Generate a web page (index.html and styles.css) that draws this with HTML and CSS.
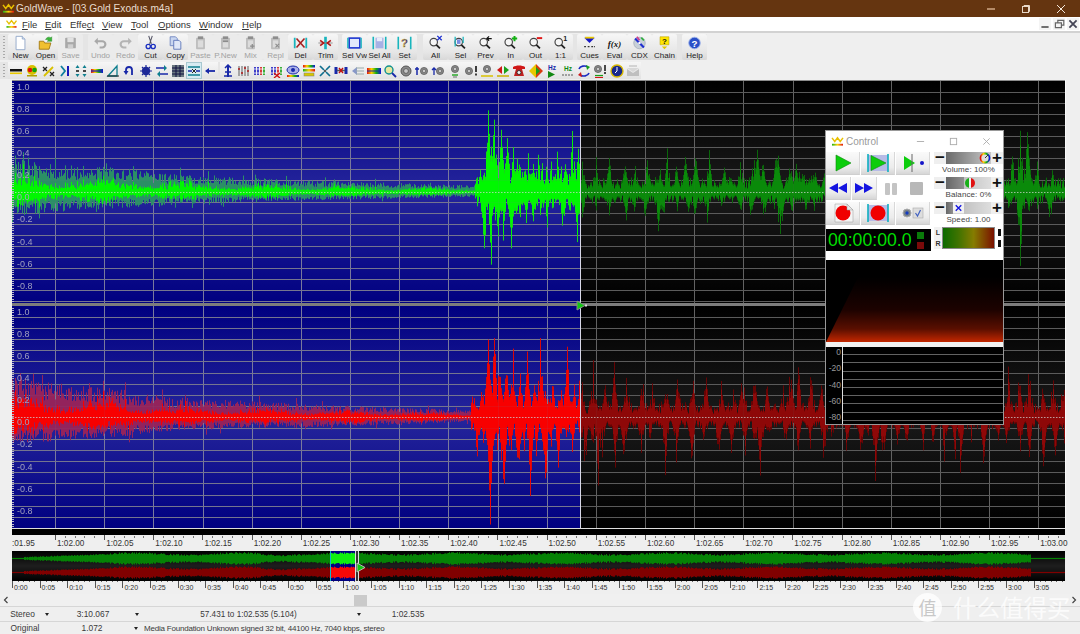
FILE: index.html
```html
<!DOCTYPE html>
<html lang="en">
<head>
<meta charset="utf-8">
<title>GoldWave</title>
<link rel="stylesheet" href="styles.css">
</head>
<body>
<svg class="defs" width="0" height="0">
  <defs>
    <linearGradient id="rain" x1="0" x2="1" y1="0" y2="0"><stop offset="0" stop-color="#19b319"/><stop offset=".5" stop-color="#ffd400"/><stop offset="1" stop-color="#e01010"/></linearGradient>
    <linearGradient id="specg" x1="0" x2="0" y1="0" y2="1"><stop offset="0" stop-color="#000"/><stop offset=".5" stop-color="#1c0200"/><stop offset=".8" stop-color="#5a0f00"/><stop offset="1" stop-color="#c42700"/></linearGradient>
    <linearGradient id="multi" x1="0" x2="1" y1="0" y2="0"><stop offset="0" stop-color="#e01010"/><stop offset=".33" stop-color="#ffd400"/><stop offset=".66" stop-color="#10b010"/><stop offset="1" stop-color="#1010e0"/></linearGradient>
    <symbol id="logo" viewBox="0 0 14 12"><path d="M1 2l3 4 3-4 3 4 3-4" fill="none" stroke="#e8c000" stroke-width="1.6"/><rect x="1" y="8.5" width="12" height="2" fill="url(#rain)"/></symbol>
    <symbol id="mag" viewBox="0 0 18 18"><circle cx="7" cy="8" r="4.2" fill="#f6f6f6" stroke="#444" stroke-width="1.3"/><path d="M10 11l4 4" stroke="#222" stroke-width="2"/></symbol>
    <symbol id="clip" viewBox="0 0 18 18"><rect x="4" y="3" width="10" height="13" rx="1" fill="#bdbdbd"/><rect x="6" y="1.5" width="6" height="3" fill="#8e8e8e"/><rect x="6" y="6" width="6" height="8" fill="#dcdcdc"/></symbol>
    <symbol id="dial" viewBox="0 0 14 14"><circle cx="7" cy="7" r="5" fill="#8a8a8a" stroke="#555"/><circle cx="7" cy="7" r="2.4" fill="#c8c8c8" stroke="#444" stroke-width=".7"/></symbol>
    <symbol id="mini" viewBox="0 0 14 14"><g stroke="#1515c0" stroke-width="1.6"><path d="M2 3v8M5 3v8"/></g><g stroke="#d01010" stroke-width="1.6"><path d="M8 3v8"/></g><g stroke="#10a010" stroke-width="1.6"><path d="M11 3v8"/></g><path d="M1 5h12M1 9h12" stroke="#fff" stroke-width=".8"/></symbol>
  </defs>
</svg>

<div class="app">
  <header class="titlebar">
    <svg class="title-logo"><use href="#logo"/></svg>
    <span class="title-text">GoldWave - [03.Gold Exodus.m4a]</span>
    <span class="winbtns">
      <svg class="wb" viewBox="0 0 10 10"><path d="M1 5h8" stroke="#d8b090" stroke-width="1.4"/></svg>
      <svg class="wb" viewBox="0 0 10 10"><rect x="1.5" y="2.5" width="6" height="6" fill="none" stroke="#e8d8c8"/><path d="M3 2.5v-1h5.5v6h-1" fill="none" stroke="#e8d8c8"/></svg>
      <svg class="wb" viewBox="0 0 10 10"><path d="M1 1l8 8M9 1l-8 8" stroke="#f4e8dc" stroke-width="1"/></svg>
    </span>
  </header>

  <nav class="menubar">
    <svg class="menu-logo"><use href="#logo"/></svg>
    <span class="mi m-file"><u>F</u>ile</span>
    <span class="mi m-edit"><u>E</u>dit</span>
    <span class="mi m-effect">Effe<u>c</u>t</span>
    <span class="mi m-view"><u>V</u>iew</span>
    <span class="mi m-tool"><u>T</u>ool</span>
    <span class="mi m-options"><u>O</u>ptions</span>
    <span class="mi m-window"><u>W</u>indow</span>
    <span class="mi m-help"><u>H</u>elp</span>
    <span class="mdi">
      <svg class="mdb" viewBox="0 0 10 10"><path d="M2 7.5h6" stroke="#555" stroke-width="1.4"/></svg>
      <svg class="mdb" viewBox="0 0 10 10"><path d="M2 4h5v4H2zM4 4V2h5v4H7" fill="none" stroke="#666"/></svg>
      <svg class="mdb" viewBox="0 0 10 10"><path d="M2 2l6 6M8 2l-6 6" stroke="#445" stroke-width="1.5"/></svg>
    </span>
  </nav>

  <section class="toolbars">
    <div class="tb-row">
      <div class="band band-main">
        <i class="grip"></i>
        <div class="btn"><svg class="ic" viewBox="0 0 18 18"><path d="M4 1.500h7l3 3v12H4z" fill="#fff" stroke="#8fa6c8"/><path d="M11 1.500v3h3" fill="#dde6f5" stroke="#8fa6c8"/></svg><span>New</span></div>
        <div class="btn"><svg class="ic" viewBox="0 0 18 18"><path d="M2 7h5l1 2h7l-2 7H2z" fill="#f0c030" stroke="#a07810"/><path d="M9 5c2-3 4-3 6-2l1-1v5h-5l1.500-1.300c-1-.7-2-.7-3.500-.7z" fill="#39b739" stroke="#1c7f1c" stroke-width=".5"/></svg><span>Open</span></div>
        <div class="btn off"><svg class="ic" viewBox="0 0 18 18"><rect x="3" y="3" width="12" height="12" rx="1" fill="#a9a9a9"/><rect x="5.500" y="3" width="7" height="5" fill="#e2e2e2"/><rect x="6" y="10.500" width="6" height="4.500" fill="#cfcfcf"/></svg><span>Save</span></div>
        <i class="gap5"></i>
        <div class="btn off"><svg class="ic" viewBox="0 0 18 18"><path d="M5 7h6a3.500 3.500 0 0 1 0 7H8" fill="none" stroke="#a8a8a8" stroke-width="2.400"/><path d="M2 7l4-4v8z" fill="#a8a8a8"/></svg><span>Undo</span></div>
        <div class="btn off"><svg class="ic" viewBox="0 0 18 18"><path d="M13 7H7a3.500 3.500 0 0 0 0 7h3" fill="none" stroke="#b4b4b4" stroke-width="2.400"/><path d="M16 7l-4-4v8z" fill="#b4b4b4"/></svg><span>Redo</span></div>
        <div class="btn"><svg class="ic" viewBox="0 0 18 18"><path d="M7 1l3 9M11 1l-3 9" stroke="#556" stroke-width="1.200"/><circle cx="6.500" cy="13" r="2.400" fill="none" stroke="#1a2fc0" stroke-width="1.500"/><circle cx="12" cy="13" r="2.400" fill="none" stroke="#1a2fc0" stroke-width="1.500"/></svg><span>Cut</span></div>
        <div class="btn"><svg class="ic" viewBox="0 0 18 18"><path d="M3 2h6l2 2v8H3z" fill="#c9d6f0" stroke="#6d84c0"/><path d="M7 6h6l2 2v8H7z" fill="#dfe7f8" stroke="#5b74b8"/></svg><span>Copy</span></div>
        <div class="btn off"><svg class="ic"><use href="#clip"/></svg><span>Paste</span></div>
        <div class="btn off"><svg class="ic" viewBox="0 0 18 18"><use href="#clip" width="18" height="18"/><rect x="6" y="6" width="6" height="2" fill="#8c8c8c"/></svg><span>P.New</span></div>
        <div class="btn off"><svg class="ic" viewBox="0 0 18 18"><use href="#clip" width="18" height="18"/><path d="M11 10v5M8.500 12.500h5" stroke="#8c8c8c" stroke-width="1.400"/></svg><span>Mix</span></div>
        <div class="btn off"><svg class="ic" viewBox="0 0 18 18"><use href="#clip" width="18" height="18"/><path d="M9 10l4 4M13 10l-4 4" stroke="#8c8c8c" stroke-width="1.200"/></svg><span>Repl</span></div>
        <div class="btn"><svg class="ic" viewBox="0 0 18 18"><path d="M2.500 3v12M15.500 3v12" stroke="#19b5bd" stroke-width="2"/><path d="M4.500 4l9 10M13.500 4l-9 10" stroke="#a52020" stroke-width="1.800"/></svg><span>Del</span></div>
        <div class="btn"><svg class="ic" viewBox="0 0 18 18"><path d="M9 2v14" stroke="#19b5bd" stroke-width="3"/><path d="M1 9h16" stroke="#888" stroke-width="1"/><path d="M3 6l4 3-4 3M15 6l-4 3 4 3" fill="none" stroke="#b01818" stroke-width="1.800"/></svg><span>Trim</span></div>
        <i class="gap4"></i>
        <div class="btn"><svg class="ic" viewBox="0 0 18 18"><rect x="3" y="3.500" width="12" height="11" fill="#e2e8fb" stroke="#1c35d0" stroke-width="1.800"/><path d="M1.500 3v12M16.500 3v12" stroke="#19b5bd" stroke-width="1.500"/></svg><span>Sel Vw</span></div>
        <div class="btn"><svg class="ic" viewBox="0 0 18 18"><path d="M2 2v14M16 2v14" stroke="#19b5bd" stroke-width="1.800"/><rect x="4.500" y="3" width="9" height="12" fill="#a7b1e5"/><rect x="6" y="3" width="6" height="4" fill="#e9ecfa"/></svg><span>Sel All</span></div>
        <div class="btn"><svg class="ic" viewBox="0 0 18 18"><path d="M2 2v14M16 2v14" stroke="#19b5bd" stroke-width="1.800"/><text x="9" y="14" class="q">?</text></svg><span>Set</span></div>
        <i class="gap6"></i>
        <div class="btn"><svg class="ic" viewBox="0 0 18 18"><use href="#mag" width="18" height="18"/><path d="M11 1l5 5M16 1l-5 5" stroke="#1c2fd0" stroke-width="1.500"/></svg><span>All</span></div>
        <div class="btn"><svg class="ic" viewBox="0 0 18 18"><use href="#mag" width="18" height="18"/><path d="M3 2v11M12 2v7" stroke="#19b5bd" stroke-width="1.400"/><rect x="5" y="5" width="4" height="5" fill="#7a8ae0"/></svg><span>Sel</span></div>
        <div class="btn"><svg class="ic" viewBox="0 0 18 18"><use href="#mag" width="18" height="18"/><path d="M11 4h5M13 1.500L10.500 4 13 6.500" fill="none" stroke="#111" stroke-width="1.400"/></svg><span>Prev</span></div>
        <div class="btn"><svg class="ic" viewBox="0 0 18 18"><use href="#mag" width="18" height="18"/><path d="M13.500 1v6M10.500 4h6" stroke="#12b012" stroke-width="2.200"/></svg><span>In</span></div>
        <div class="btn"><svg class="ic" viewBox="0 0 18 18"><use href="#mag" width="18" height="18"/><path d="M10.500 3.500h6" stroke="#e01818" stroke-width="2.200"/></svg><span>Out</span></div>
        <div class="btn"><svg class="ic" viewBox="0 0 18 18"><use href="#mag" width="18" height="18"/><text x="12" y="7" class="one">1</text></svg><span>1:1</span></div>
        <i class="gap4"></i>
        <div class="btn"><svg class="ic" viewBox="0 0 18 18"><path d="M3 3h12l-6 6z" fill="#1818c8"/><path d="M4 3h10" stroke="#e8c800" stroke-width="2"/><path d="M3 13h2M7 13h2M11 13h2M14 13h1" stroke="#333" stroke-width="1.400"/></svg><span>Cues</span></div>
        <div class="btn"><svg class="ic" viewBox="0 0 18 18"><text x="9" y="13" class="fx">f(x)</text></svg><span>Eval</span></div>
        <div class="btn"><svg class="ic" viewBox="0 0 18 18"><circle cx="9" cy="9" r="6.500" fill="#c8d0d8" stroke="#8a96a8" stroke-width=".6"/><path d="M4 4l10 10" stroke="#1f2fd0" stroke-width="2.400"/><path d="M6 2l3 4" stroke="#d04090" stroke-width="2"/><path d="M11 3l3 3" stroke="#30b040" stroke-width="2"/><circle cx="9" cy="9" r="1.400" fill="#fff"/></svg><span>CDX</span></div>
        <div class="btn"><svg class="ic" viewBox="0 0 18 18"><path d="M4 2h10v9H4z" fill="#ffe600" stroke="#b8a000" stroke-width=".6"/><path d="M6 13h6l-3 3z" fill="#e0c800"/><text x="9" y="10" class="q2">?</text></svg><span>Chain</span></div>
        <i class="gap5"></i>
        <div class="btn"><svg class="ic" viewBox="0 0 18 18"><circle cx="9" cy="9" r="6.500" fill="#2a50c8" stroke="#9ab0e8"/><text x="9" y="13" class="q3">?</text></svg><span>Help</span></div>
      </div>
    </div>
    <div class="tb-row tb-small">
      <div class="band band-small">
        <i class="grip"></i>
        <span class="ib"><svg viewBox="0 0 14 14"><rect x="1" y="5" width="12" height="2.500" fill="#111"/><rect x="1" y="8.500" width="12" height="1.600" fill="#e8c800"/></svg></span>
        <span class="ib"><svg viewBox="0 0 14 14"><circle cx="7" cy="6" r="5" fill="#d8c000"/><circle cx="5" cy="6" r="2.300" fill="#e01010"/><circle cx="9.500" cy="6" r="2.300" fill="#10a010"/><rect x="2" y="11" width="10" height="1.500" fill="#b0a000"/></svg></span>
        <span class="ib"><svg viewBox="0 0 14 14"><path d="M2 3l4 4M6 3L2 7M9 8l4 4M13 8l-4 4" stroke="#222" stroke-width="1.300"/><path d="M3 12L12 3" stroke="#d8c000" stroke-width="1.800"/></svg></span>
        <span class="ib"><svg viewBox="0 0 14 14"><path d="M3 2l4 5-4 5" fill="none" stroke="#0f7f9f" stroke-width="1.800"/><path d="M10 2v10" stroke="#1818b8" stroke-width="2"/></svg></span>
        <span class="ib"><svg viewBox="0 0 14 14"><path d="M3.500 1l2 3h-4zM10.500 1l2 3h-4zM3.500 13l2-3h-4zM10.500 13l2-3h-4z" fill="#0f7f8f"/><path d="M2 7h3M9 7h3" stroke="#111" stroke-width="1.500"/></svg></span>
        <span class="ib"><svg viewBox="0 0 14 14"><rect x="1" y="5" width="12" height="4" fill="url(#multi)"/><path d="M1 7h12" stroke="#1818c0" stroke-width="1.200"/></svg></span>
        <span class="ib"><svg viewBox="0 0 14 14"><path d="M2 12L11 2v10z" fill="none" stroke="#0f7f8f" stroke-width="1.300"/><path d="M1 12h12" stroke="#222"/></svg></span>
        <span class="ib"><svg viewBox="0 0 14 14"><path d="M4 8V6a3 3 0 0 1 6 0v5" fill="none" stroke="#1828a8" stroke-width="1.800"/><path d="M1.500 7h5L4 11z" fill="#1828a8"/></svg></span>
        <span class="ib"><svg viewBox="0 0 14 14"><circle cx="7" cy="7" r="4.200" fill="#1c2898"/><path d="M7 1v12M1 7h12M3 3l8 8M11 3l-8 8" stroke="#1c2898" stroke-width="1.200"/></svg></span>
        <span class="ib"><svg viewBox="0 0 14 14"><path d="M1 4h8M5 10h8" stroke="#1828a8" stroke-width="1.500"/><path d="M9 1l3 3-3 3zM5 7l-3 3 3 3z" fill="#0f7f8f"/></svg></span>
        <span class="ib"><svg viewBox="0 0 14 14"><rect x="1" y="1" width="12" height="12" fill="#6a7880"/><path d="M1 4h12M1 7h12M1 10h12M5 1v12M9 1v12" stroke="#101040"/></svg></span>
        <span class="ib sel"><svg viewBox="0 0 14 14"><path d="M1 3h12M1 11h12" stroke="#0f7f8f" stroke-width="1.600"/><path d="M1 7h4M9 7h4" stroke="#1828a8" stroke-width="1.500"/><path d="M5 5l2 2-2 2M9 5L7 7l2 2" fill="none" stroke="#222"/></svg></span>
        <span class="ib"><svg viewBox="0 0 14 14"><path d="M3 7h9" stroke="#1828a8" stroke-width="1.800"/><path d="M6 4L2 7l4 3z" fill="#1828a8"/></svg></span>
        <i class="gap2"></i>
        <span class="ib"><svg viewBox="0 0 14 14"><path d="M7 1v12" stroke="#1828a8" stroke-width="2"/><path d="M4 4l3-3 3 3M4 8h6M3 12h8" fill="none" stroke="#1828a8" stroke-width="1.500"/></svg></span>
        <span class="ib"><svg viewBox="0 0 14 14"><path d="M2 2v10M5 2v10M8 2v10M11 2v10" stroke="#888" stroke-width="1.400"/><path d="M1 5h2M4 9h2M7 4h2M10 7h2" stroke="#b01818" stroke-width="1.600"/></svg></span>
        <span class="ib"><svg><use href="#mini"/></svg></span>
        <span class="ib"><svg viewBox="0 0 14 14"><use href="#mini" width="14" height="14"/><path d="M4 9l6 5M10 9l-6 5" stroke="#d01010" stroke-width="1.300"/></svg></span>
        <span class="ib"><svg viewBox="0 0 14 14"><ellipse cx="7" cy="6" rx="6" ry="4" fill="#aab0e8" stroke="#1828a8"/><circle cx="7" cy="6" r="2" fill="#1828a8"/><rect x="1" y="11" width="12" height="2" fill="url(#multi)"/></svg></span>
        <span class="ib"><svg viewBox="0 0 14 14"><rect x="1" y="1" width="12" height="2.500" fill="url(#multi)"/><rect x="1" y="5" width="12" height="2.500" fill="url(#rain)"/><rect x="2" y="9" width="10" height="3" fill="#d8c800" stroke="#777" stroke-width=".5"/></svg></span>
        <span class="ib"><svg viewBox="0 0 14 14"><path d="M2 2l4 4M12 2L8 6M2 12l4-4M12 12L8 8" stroke="#0f6f8f" stroke-width="1.700"/><circle cx="7" cy="7" r="1" fill="#222"/></svg></span>
        <span class="ib"><svg viewBox="0 0 14 14"><rect x=".5" y="3" width="3" height="7" fill="#1828a8"/><rect x="10.500" y="3" width="3" height="7" fill="#1828a8"/><path d="M3 6.500h8" stroke="#555" stroke-width="1.500"/><path d="M5 4l4 5M9 4l-4 5" stroke="#c01010" stroke-width="1.400"/></svg></span>
        <span class="ib"><svg viewBox="0 0 14 14"><path d="M1 7l5-4v8z" fill="#8898c8"/><path d="M5 4h8M5 7h8M5 10h8" stroke="#9aa" stroke-width="1"/></svg></span>
        <span class="ib"><svg viewBox="0 0 14 14"><rect x="0" y="4" width="14" height="6" fill="url(#multi)"/><path d="M0 7h14" stroke="#1828a8"/></svg></span>
        <span class="ib"><svg viewBox="0 0 14 14"><circle cx="6" cy="6" r="4" fill="#e8e8a0" stroke="#109090" stroke-width="1.400"/><path d="M9 9l4 4" stroke="#1828a8" stroke-width="1.800"/></svg></span>
        <span class="ib"><svg><use href="#dial"/></svg></span>
        <span class="ib"><svg viewBox="0 0 14 14"><use href="#dial" x="4" y="2" width="10" height="10"/><path d="M2 3v8M0 5h4" stroke="#1828a8" stroke-width="1.500"/></svg></span>
        <span class="ib"><svg viewBox="0 0 14 14"><use href="#dial" x="4" y="2" width="10" height="10"/><path d="M3 11V4M1 6l2-2 2 2" fill="none" stroke="#1828a8" stroke-width="1.300"/></svg></span>
        <span class="ib"><svg viewBox="0 0 14 14"><use href="#dial" x="2" y="0" width="10" height="10"/><path d="M4 11h6" stroke="#10a010" stroke-width="1.300"/><path d="M5 13h4" stroke="#888" stroke-width="1.300"/></svg></span>
        <span class="ib"><svg viewBox="0 0 14 14"><use href="#dial" x="0" y="2" width="10" height="10"/><path d="M12 2v6M12 9.500v2" stroke="#111" stroke-width="1.600"/></svg></span>
        <span class="ib"><svg viewBox="0 0 14 14"><use href="#dial" x="2" y="0" width="10" height="10"/><path d="M1 12h12" stroke="#d8c000" stroke-width="1.500"/></svg></span>
        <span class="ib"><svg viewBox="0 0 14 14"><path d="M6 2L1 6l5 4z" fill="#d01818"/><path d="M8 2l5 4-5 4z" fill="#18a018"/><path d="M1 12h12" stroke="#c8b000" stroke-width="1.500"/></svg></span>
        <span class="ib"><svg viewBox="0 0 14 14"><path d="M1 3c3-2 9-2 12 0v2H1z" fill="#d01818"/><path d="M4 5h6l2 7H2z" fill="#c02020"/><circle cx="7" cy="8.500" r="2" fill="#eee" stroke="#222" stroke-width=".8"/></svg></span>
        <span class="ib"><svg viewBox="0 0 14 14"><path d="M7 0l7 7-7 7z" fill="#d83a10"/><path d="M7 0L0 7l7 7z" fill="#e8c800"/><path d="M7 3l4 4-4 4z" fill="#18a018"/></svg></span>
        <span class="ib"><svg viewBox="0 0 14 14"><text x="7" y="6" class="hz">Hz</text><path d="M3 7l7 3.500L3 14z" fill="#118811"/></svg></span>
        <span class="ib"><svg viewBox="0 0 14 14"><text x="7" y="7" class="hz hzg">Hz</text><path d="M1 11h12" stroke="#888" stroke-width="1.600" stroke-dasharray="2 1"/></svg></span>
        <span class="ib"><svg viewBox="0 0 14 14"><path d="M2 5c1-3 6-4 9-2M12 9c-1 3-6 4-9 2" fill="none" stroke="#1828c0" stroke-width="1.600"/><path d="M9 1l4 2-3 3z" fill="#18a018"/><path d="M5 13l-4-2 3-3z" fill="#d01818"/></svg></span>
        <span class="ib"><svg viewBox="0 0 14 14"><use href="#dial" x="0" y="0" width="10" height="10"/><path d="M12 1v6M12 8v2" stroke="#111" stroke-width="1.500"/><path d="M2 11.500h8" stroke="#18a018" stroke-width="1.200"/><path d="M2 13.500h8" stroke="#d01818" stroke-width="1.200"/></svg></span>
        <span class="ib"><svg viewBox="0 0 14 14"><circle cx="7" cy="7" r="6" fill="#18288c" stroke="#d8b800" stroke-width="1.400"/><path d="M7 3v4l-2 2" fill="none" stroke="#fff" stroke-width="1"/></svg></span>
        <span class="ib"><svg viewBox="0 0 14 14"><path d="M1 5l6 4 6-4v7H1z" fill="#bfbfbf"/><path d="M1 4h12L7 8z" fill="#d8d8d8"/><path d="M3 2h8" stroke="#c8c8c8" stroke-width="1.500"/></svg></span>
      </div>
    </div>
  </section>

  <main class="workspace">
    <div class="wave-frame">
      <div class="channel ch-top">
        <canvas id="chL" class="wave" width="1053" height="222"></canvas>
        <div class="amps">
          <span>1.0</span><span>0.8</span><span>0.6</span><span>0.4</span><span>0.2</span><span>0.0</span><span>-0.2</span><span>-0.4</span><span>-0.6</span><span>-0.8</span>
        </div>
      </div>
      <div class="separator"></div>
      <div class="channel ch-bottom">
        <canvas id="chR" class="wave" width="1053" height="222"></canvas>
        <div class="amps">
          <span>1.0</span><span>0.8</span><span>0.6</span><span>0.4</span><span>0.2</span><span>0.0</span><span>-0.2</span><span>-0.4</span><span>-0.6</span><span>-0.8</span>
        </div>
      </div>
      <svg class="cursor-mark" viewBox="0 0 11 11"><path d="M1 1l8 4.500-8 4.500z" fill="#11c811" stroke="#888"/><rect x="9" y="4.500" width="2" height="2" fill="#ddd"/></svg>
    </div>
    <div class="black-strip"></div>
    <div class="ruler">
      <span class="r-first">:01.95</span>
      <span>1:02.00</span><span>1:02.05</span><span>1:02.10</span><span>1:02.15</span><span>1:02.20</span><span>1:02.25</span><span>1:02.30</span><span>1:02.35</span><span>1:02.40</span><span>1:02.45</span><span>1:02.50</span><span>1:02.55</span><span>1:02.60</span><span>1:02.65</span><span>1:02.70</span><span>1:02.75</span><span>1:02.80</span><span>1:02.85</span><span>1:02.90</span><span>1:02.95</span><span class="r-last">1:03.00</span>
    </div>
    <div class="over-wrap">
      <canvas id="overview" width="1053" height="30"></canvas>
      <svg class="over-mark" viewBox="0 0 11 11"><path d="M1 1l8 4.500-8 4.500z" fill="#11c811" stroke="#bbb"/></svg>
    </div>
    <div class="ruler2">
      <span>0:00</span><span>0:05</span><span>0:10</span><span>0:15</span><span>0:20</span><span>0:25</span><span>0:30</span><span>0:35</span><span>0:40</span><span>0:45</span><span>0:50</span><span>0:55</span><span>1:00</span><span>1:05</span><span>1:10</span><span>1:15</span><span>1:20</span><span>1:25</span><span>1:30</span><span>1:35</span><span>1:40</span><span>1:45</span><span>1:50</span><span>1:55</span><span>2:00</span><span>2:05</span><span>2:10</span><span>2:15</span><span>2:20</span><span>2:25</span><span>2:30</span><span>2:35</span><span>2:40</span><span>2:45</span><span>2:50</span><span>2:55</span><span>3:00</span><span class="r-last">3:05</span>
    </div>
  </main>

  <div class="scrollbar">
    <svg class="chev" viewBox="0 0 6 8"><path d="M4.500 1L1.500 4l3 3" fill="none" stroke="#444" stroke-width="1.200"/></svg>
    <span class="thumb"></span>
    <svg class="chev chev-r" viewBox="0 0 6 8"><path d="M1.500 1l3 3-3 3" fill="none" stroke="#444" stroke-width="1.200"/></svg>
  </div>

  <footer class="status">
    <div class="st-row st-one">
      <span class="c1">Stereo</span><i class="dd"></i>
      <span class="c2">3:10.067</span><i class="dd"></i>
      <span class="c3">57.431 to 1:02.535 (5.104)</span><i class="dd"></i>
      <span class="c4">1:02.535</span>
    </div>
    <div class="st-row st-two">
      <span class="c1">Original</span>
      <span class="c2 c2b">1.072</span><i class="dd"></i>
      <span class="c5">Media Foundation Unknown signed 32 bit, 44100 Hz, 7040 kbps, stereo</span>
    </div>
  </footer>

  <section class="control">
    <div class="ctl-title">
      <svg class="ctl-logo"><use href="#logo"/></svg>
      <span class="ctl-name">Control</span>
      <span class="ctl-wbs">
        <svg class="cw" viewBox="0 0 10 10"><path d="M1 5h8" stroke="#aaa"/></svg>
        <svg class="cw" viewBox="0 0 10 10"><rect x="1.500" y="1.500" width="7" height="7" fill="none" stroke="#aaa"/></svg>
        <svg class="cw" viewBox="0 0 10 10"><path d="M1.500 1.500l7 7M8.500 1.500l-7 7" stroke="#aaa"/></svg>
      </span>
    </div>
    <div class="ctl-grid">
      <div class="ctl-left">
        <div class="ctl-row">
          <div class="cb"><svg class="cbi" viewBox="0 0 28 20"><path d="M7 2l15 8-15 8z" fill="#0ccd0c" stroke="#0a8a0a" stroke-width=".6"/></svg></div>
          <div class="cb"><svg class="cbi" viewBox="0 0 28 20"><rect x="4" y="2" width="20" height="16" fill="#b7bbe6"/><path d="M4 1v18M24 1v18" stroke="#10b0c0" stroke-width="1.600"/><path d="M7 2.500l15 7.500-15 7.500z" fill="#0ccd0c" stroke="#0a8a0a" stroke-width=".6"/></svg></div>
          <div class="cb"><svg class="cbi" viewBox="0 0 28 20"><path d="M5 3l11 7-11 7z" fill="#0ccd0c"/><path d="M13 1v18" stroke="#666"/><circle cx="23" cy="10" r="2" fill="#1414c8"/></svg></div>
        </div>
        <div class="ctl-row">
          <div class="cb cb-s"><svg class="cbi" viewBox="0 0 24 14"><path d="M12 2v10L3 7zM21 2v10l-9-5z" fill="#1414e0"/></svg></div>
          <div class="cb cb-s"><svg class="cbi" viewBox="0 0 24 14"><path d="M3 2v10l9-5zM12 2v10l9-5z" fill="#1414e0"/></svg></div>
          <div class="cb-off"><i class="pbar"></i><i class="pbar"></i></div>
          <div class="cb-off"><i class="stopb"></i></div>
        </div>
        <div class="ctl-row">
          <div class="cb"><svg class="cbi" viewBox="0 0 28 20"><path d="M6 1h12l6 6v12H6z" fill="#f4f4f4" stroke="#aaa" stroke-width=".6"/><circle cx="14" cy="10" r="7.500" fill="#f00000"/><path d="M18 1l6 6h-6z" fill="#e8e8e8" stroke="#999" stroke-width=".5"/></svg></div>
          <div class="cb"><svg class="cbi" viewBox="0 0 28 20"><rect x="4" y="2" width="20" height="16" fill="#b7bbe6"/><path d="M4 1v18M24 1v18" stroke="#10b0c0" stroke-width="1.600"/><circle cx="14" cy="10" r="7.500" fill="#f00000"/></svg></div>
          <div class="cb"><svg class="cbi" viewBox="0 0 28 20"><circle cx="8" cy="10" r="4" fill="#7a8288" stroke="#aaa"/><circle cx="8" cy="10" r="1.700" fill="#143cc0"/><rect x="14" y="5" width="10" height="10" fill="#ddd" stroke="#aaa" stroke-width=".6"/><path d="M16.500 10l2 3 3-6" fill="none" stroke="#4060c0" stroke-width="1.200"/></svg></div>
        </div>
        <div class="timer">
          <span class="time">00:00:00.0</span>
          <span class="lamps"><i class="lamp-g"></i><i class="lamp-r"></i></span>
        </div>
      </div>
      <div class="ctl-right">
        <div class="slider"><i class="sb">−</i><div class="track t-vol"><svg class="knob" viewBox="0 0 12 12"><circle cx="6" cy="6" r="4.500" fill="#ddd" stroke="url(#multi)" stroke-width="1.800"/><path d="M6 6l3-3" stroke="#333"/></svg></div><i class="sb">+</i></div>
        <p class="sl-label">Volume: 100%</p>
        <div class="slider"><i class="sb">−</i><div class="track t-bal"><span class="t-dark"></span><svg class="knob" viewBox="0 0 12 12"><path d="M6 1a5 5 0 0 0 0 10z" fill="#18b018"/><path d="M6 1a5 5 0 0 1 0 10z" fill="#e01010"/><rect x="5" y="1" width="2" height="10" fill="#eee"/></svg></div><i class="sb">+</i></div>
        <p class="sl-label">Balance: 0%</p>
        <div class="slider"><i class="sb">−</i><div class="track t-spd"><span class="t-dark t-dark-s"></span><svg class="knob knob-w" viewBox="0 0 12 12"><rect width="12" height="12" fill="#f2f2f2"/><path d="M3 3l6 6M9 3l-6 6" stroke="#1414e0" stroke-width="1.500"/></svg></div><i class="sb">+</i></div>
        <p class="sl-label">Speed: 1.00</p>
        <div class="meter">
          <span class="lr"><b>L</b><b>R</b></span>
          <span class="meter-bar"></span>
          <span class="peaks"><i></i><i></i></span>
        </div>
      </div>
    </div>
    <svg class="spec" viewBox="0 0 176 82" preserveAspectRatio="none"><rect width="176" height="82" fill="#000"/><path d="M0 82L32 17H176V82z" fill="url(#specg)"/></svg>
    <div class="ctl-bar"></div>
    <div class="spec2">
      <div class="db"><span>0</span><span>-20</span><span>-40</span><span>-60</span><span>-80</span></div>
      <div class="db-lines"></div>
    </div>
  </section>

  <aside class="watermark">
    <span class="wm-circle">值</span>
    <span class="wm-text">什么值得买</span>
  </aside>
</div>
<script src="script.js"></script>
</body>
</html>
```

FILE: styles.css
```css
* { box-sizing: border-box; }
html, body { margin: 0; padding: 0; }
body { width: 1080px; height: 634px; overflow: hidden; background: #efefef; font-family: "Liberation Sans", Arial, sans-serif; color: #222; }
.defs { position: absolute; }
.app { position: relative; width: 1080px; height: 634px; display: flex; flex-direction: column; overflow: hidden; }

.titlebar { height: 17px; background: #653510; display: flex; align-items: center; color: #e8dccf; font-size: 10.200px; padding-left: 2px; }
.title-logo { width: 13px; height: 11px; margin-right: 1px; }
.winbtns { margin-left: auto; display: flex; gap: 25px; margin-right: 14px; }
.wb { width: 10px; height: 10px; display: block; }

.menubar { height: 16px; background: #fff; border-bottom: 2px solid #d2d2d2; display: flex; align-items: center; font-size: 9.500px; position: relative; padding-left: 5px; color: #333; }
.menu-logo { width: 13px; height: 10px; margin-right: 4px; }
.mi { flex: none; }
.m-file { width: 23px; }
.m-edit { width: 25px; }
.m-effect { width: 32px; }
.m-view { width: 29px; }
.m-tool { width: 27px; }
.m-options { width: 41px; }
.m-window { width: 43px; }
.m-help { width: 30px; }
.mdi { margin-left: auto; display: flex; gap: 2px; margin-right: 1px; }
.mdb { width: 12px; height: 12px; background: #f4f4f4; display: block; }

.toolbars { height: 47px; padding-top: 1px; background: #efefef; display: flex; flex-direction: column; gap: 2px; }
.tb-row { display: flex; }
.band { display: flex; align-items: stretch; background: #e5e5e5; position: relative; padding-left: 8px; }
.band-main { height: 26px; }
.band-small { height: 17px; width: 638px; }
.grip { position: absolute; left: 3px; top: 2px; bottom: 2px; width: 2px; background: repeating-linear-gradient(180deg, #aaa 0 1px, transparent 1px 3px); }
.btn { width: 25px; display: flex; flex-direction: column; align-items: center; background: linear-gradient(180deg, #f6f6f6, #e6e6e6 70%, #d8d8d8); border-radius: 2px; font-size: 8px; line-height: 9px; color: #222; white-space: nowrap; }
.btn.off { background: #ebebeb; color: #a2a2a2; }
.ic { width: 17px; height: 16px; margin-top: 1px; display: block; }
.gap2 { width: 1.500px; flex: none; }
.gap4 { width: 4px; flex: none; }
.gap5 { width: 5px; flex: none; }
.gap6 { width: 6px; flex: none; }
.q { font: bold 13px "Liberation Sans", sans-serif; fill: #2f2fa0; text-anchor: middle; stroke: #e8c800; stroke-width: .4px; }
.q2 { font: bold 9px "Liberation Sans", sans-serif; fill: #111; text-anchor: middle; }
.q3 { font: bold 11px "Liberation Sans", sans-serif; fill: #fff; text-anchor: middle; }
.one { font: bold 8px "Liberation Sans", sans-serif; fill: #222; }
.fx { font: italic bold 10px "Liberation Serif", serif; fill: #111; text-anchor: middle; }
.hz { font: bold 6.500px "Liberation Sans", sans-serif; fill: #1828a8; text-anchor: middle; }
.hzg { fill: #108a10; }

.ib { width: 16.200px; flex: none; display: flex; align-items: center; justify-content: center; background: linear-gradient(180deg, #f6f6f6, #e2e2e2); }
.ib.sel { background: #d6ebf2; outline: 1px solid #a8c8d0; outline-offset: -1px; }
.ib svg { width: 14px; height: 14px; display: block; }

.workspace { padding: 0 15px 0 12px; display: flex; flex-direction: column; }
.wave-frame { position: relative; border-top: 1px solid #8c8c8c; box-shadow: 1px 0 0 #fbfbfb; }
.channel { position: relative; height: 222px; }
.separator { height: 3px; background: #7c7c7c; }
.wave { position: absolute; inset: 0; display: block; }
.amps { position: relative; display: flex; flex-direction: column; padding: 0 0 0 5px; color: #a0a0be; font-size: 9px; }
.amps span { height: 22.080px; line-height: 12px; }
.cursor-mark { position: absolute; left: 564px; top: 219px; width: 11px; height: 11px; }
.black-strip { height: 7px; background: #000; border-top: 1px solid #ddd; }

.ruler { height: 14px; display: flex; font-size: 8.200px; line-height: 12px; color: #333; background: repeating-linear-gradient(90deg, #777 0 1px, transparent 1px 9.833px) 43px 1px / 100% 2px no-repeat #efefef; }
.ruler span { flex: 0 0 49.170px; padding: 3px 0 0 2px; white-space: nowrap; background: linear-gradient(#555, #555) 0 0 / 1px 5px no-repeat; }
.ruler .r-first { flex: 0 0 43px; padding-left: 0; background: none; }
.ruler .r-last { flex: 0 0 40px; overflow: hidden; }
.over-wrap { position: relative; margin-top: 2px; height: 30px; }
#overview { display: block; }
.over-mark { position: absolute; left: 344px; top: 11px; width: 11px; height: 11px; }
.ruler2 { height: 11px; display: flex; font-size: 7px; line-height: 9px; color: #333; margin-bottom: 2px; }
.ruler2 span { flex: 0 0 27.620px; padding: 2px 0 0 2px; white-space: nowrap; background: linear-gradient(#555, #555) 0 0 / 1px 7px no-repeat, repeating-linear-gradient(90deg, #666 0 1px, transparent 1px 5.524px) 0 0 / 100% 1px no-repeat; }
.ruler2 .r-last { flex: 0 0 31px; }

.scrollbar { height: 12px; display: flex; align-items: center; background: #f0f0f0; padding-left: 3px; }
.chev { width: 6px; height: 8px; flex: none; }
.chev-r { margin-left: auto; margin-right: 3px; }
.thumb { width: 13px; height: 11px; background: #cacaca; margin-left: 345px; flex: none; }

.status { font-size: 8.400px; color: #3a3a3a; }
.st-row { display: flex; align-items: center; border-top: 1px solid #d6d6d6; background: #efefef; }
.st-one { height: 15px; }
.st-two { height: 13px; }
.status span { text-align: center; white-space: nowrap; flex: none; }
.c1 { width: 45px; }
.st-two .c1 { width: 50px; }
.dd { width: 0; height: 0; border: 2.500px solid transparent; border-top: 3px solid #222; border-bottom: 0; flex: none; margin: 0 3px 0 0; }
.st-one .c1 + .dd { margin-right: 2px; }
.c2 { width: 84px; }
.c2b { margin-right: 0; }
.c3 { width: 215px; padding-right: 2px; font-size: 8.200px; }
.c4 { width: 88px; }
.status .c5 { text-align: left; margin-left: 3px; font-size: 8px; letter-spacing: -.2px; }

.control { position: absolute; left: 825px; top: 130px; width: 179px; height: 295px; background: #fff; border: 1px solid #999; display: flex; flex-direction: column; }
.ctl-title { height: 21px; flex: none; display: flex; align-items: center; padding-left: 5px; color: #9a9a9a; font-size: 10px; }
.ctl-logo { width: 13px; height: 11px; margin-right: 2px; }
.ctl-wbs { margin-left: auto; display: flex; gap: 24px; margin-right: 12px; }
.cw { width: 9px; height: 9px; display: block; }
.ctl-grid { display: grid; grid-template-columns: 105px 1fr; column-gap: 3px; height: 103px; flex: none; }
.ctl-left { display: flex; flex-direction: column; gap: 2px; }
.ctl-row { height: 23px; display: flex; gap: 1px; }
.cb { width: 34px; display: flex; align-items: center; justify-content: center; background: linear-gradient(180deg, #fafafa, #ececec 70%, #d6d6d6); border-right: 1px solid #d8d8d8; border-bottom: 1px solid #cfcfcf; }
.cbi { width: 28px; height: 20px; display: block; }
.cb-s { width: 25px; }
.cb-s .cbi { width: 24px; height: 14px; }
.cb-off { width: 25px; display: flex; align-items: center; justify-content: center; gap: 2px; }
.pbar { width: 5px; height: 12px; background: #c4c4c4; border-radius: 1px; }
.stopb { width: 13px; height: 13px; background: #b8b8b8; border-radius: 1px; }
.timer { height: 22px; margin-top: 2px; background: #000; display: flex; align-items: center; padding-left: 2px; width: 105px; }
.time { color: #00df00; font-size: 17.700px; line-height: 22px; width: 86px; white-space: nowrap; }
.lamps { display: flex; flex-direction: column; gap: 3px; margin-left: 3px; }
.lamps i { display: block; width: 7px; height: 7px; }
.lamp-g { background: #0a7a0a; }
.lamp-r { background: #7a0a0a; }
.ctl-right { display: flex; flex-direction: column; min-width: 0; }
.slider { height: 12px; display: flex; background: #f0f0f0; flex: none; }
.sb { width: 12px; flex: none; font: bold 17px/12px "Liberation Sans", sans-serif; color: #111; text-align: center; background: #efefef; }
.track { flex: 1; display: flex; align-items: center; background: linear-gradient(90deg, #b0b0b0, #dedede); min-width: 0; }
.t-vol { background: linear-gradient(90deg, #6a6a6a, #c8c8c8); justify-content: flex-end; }
.knob { width: 12px; height: 12px; flex: none; display: block; }
.t-dark { flex: none; width: 18px; height: 12px; background: linear-gradient(90deg, #666, #909090); }
.t-dark-s { width: 7px; }
.knob-w { width: 11px; }
.sl-label { margin: 0; height: 13px; font-size: 8px; line-height: 12px; text-align: center; color: #444; flex: none; letter-spacing: .1px; }
.meter { height: 22px; display: flex; align-items: stretch; }
.lr { width: 8px; display: flex; flex-direction: column; justify-content: space-around; font-size: 7px; line-height: 8px; text-align: center; color: #333; background: #f2f2f2; flex: none; }
.meter-bar { width: 53px; background: linear-gradient(90deg, #0b6a00, #3f7300 30%, #857c00 60%, #7a1000 100%); border: 1px solid #888; flex: none; }
.peaks { width: 9px; display: flex; flex-direction: column; justify-content: space-around; align-items: center; flex: none; }
.peaks i { width: 3px; height: 7px; background: #111; }
.spec { display: block; width: 177px; height: 82px; margin-top: 5px; flex: none; }
.ctl-bar { height: 5px; flex: none; background: #f2f2f2; }
.spec2 { flex: 1; background: #000; display: flex; min-height: 0; }
.db { width: 17px; flex: none; border-right: 1px solid #ddd; display: flex; flex-direction: column; align-items: flex-end; font-size: 8.500px; line-height: 16.300px; color: #999; padding-right: 1px; overflow: hidden; }
.db span:first-child { margin-top: -3px; }
.db-lines { flex: 1; background: repeating-linear-gradient(180deg, #000 0 7.200px, #626262 7.200px 8.200px) 0 0 no-repeat; }

.watermark { position: absolute; left: 913px; top: 592px; display: flex; align-items: center; gap: 11px; color: rgba(255, 255, 255, .78); font-family: "Noto Sans CJK SC", sans-serif; }
.wm-circle { width: 29px; height: 29px; border-radius: 50%; background: rgba(255, 255, 255, .78); color: #c8c8c8; font-size: 18px; line-height: 28px; text-align: center; flex: none; }
.wm-text { font-size: 23.500px; line-height: 30px; white-space: nowrap; }
```

FILE: script.js
```js
(function () {
  function rng(seed) {
    return function () {
      seed |= 0; seed = seed + 0x6D2B79F5 | 0;
      var t = Math.imul(seed ^ seed >>> 15, 1 | seed);
      t = t + Math.imul(t ^ t >>> 7, 61 | t) ^ t;
      return ((t ^ t >>> 14) >>> 0) / 4294967296;
    };
  }
  var W = 1053, SEL = 568, STEP = 49.17;

  function background(c, h, blue0, blue1, dark0, dark1) {
    var g = c.createLinearGradient(0, 0, 0, h);
    g.addColorStop(0, blue0); g.addColorStop(.5, blue1); g.addColorStop(1, blue0);
    c.fillStyle = g; c.fillRect(0, 0, SEL, h);
    g = c.createLinearGradient(0, 0, 0, h);
    g.addColorStop(0, dark0); g.addColorStop(.5, dark1); g.addColorStop(1, dark0);
    c.fillStyle = g; c.fillRect(SEL, 0, W - SEL, h);
  }
  function grid(c, h, first, step, alpha) {
    c.globalAlpha = alpha;
    for (var x = 43; x < W; x += STEP) {
      c.fillStyle = x < SEL ? '#7a7a9c' : '#626262';
      c.fillRect(Math.round(x), 0, 1, h);
    }
    for (var y = first; y < h; y += step) {
      c.fillStyle = '#75758f'; c.fillRect(0, Math.round(y), SEL, 1);
      c.fillStyle = '#5c5c5c'; c.fillRect(SEL, Math.round(y), W - SEL, 1);
    }
    c.globalAlpha = 1;
  }
  function spikeAmp(list, x, w) {
    var a = 0;
    for (var i = 0; i < list.length; i++) {
      var v = list[i][1] * Math.exp(-Math.abs(x - list[i][0]) / w);
      if (v > a) a = v;
    }
    return a;
  }
  function lerpEnv(env, x) {
    for (var i = 1; i < env.length; i++) {
      if (x <= env[i][0]) {
        var a = env[i - 1], b = env[i];
        return a[1] + (b[1] - a[1]) * (x - a[0]) / (b[0] - a[0]);
      }
    }
    return env[env.length - 1][1];
  }
  function channel(o) {
    var cv = document.getElementById(o.id), c = cv.getContext('2d'), h = cv.height;
    background(c, h, '#000080', '#25259c', '#000000', '#1a1a1a');
    grid(c, h, o.first, o.step, 1);
    var r = rng(o.seed), darkT = [], darkB = [], sx;
    function jag() { return r() < .32 ? .4 + .3 * r() : .82 + .18 * r(); }
    for (sx = 582; sx < 1066; sx += 9 + r() * 8) {
      darkT.push([sx, o.darkT[0] + r() * (o.darkT[1] - o.darkT[0])]);
      darkB.push([sx + r() * 6 - 3, o.darkB[0] + r() * (o.darkB[1] - o.darkB[0])]);
    }
    darkT = darkT.concat(o.extraT); darkB = darkB.concat(o.extraB);
    for (var col = 0; col < W; col++) {
      var ax = col + 12, t, b, it, ib, pk, inner, selected = ax < 580;
      if (ax < o.burst) {
        var patch = .75 + .25 * Math.sin(ax / 13);
        t = lerpEnv(o.envT, ax) * (.45 + .55 * r());
        b = lerpEnv(o.envB, ax) * (.45 + .55 * r());
        if (r() > .94) t *= 1.4;
        if (r() > .94) b *= 1.4;
        it = t * patch * (.35 + .4 * r()); ib = b * patch * (.4 + .45 * r());
        pk = o.quiet; inner = o.bright;
      } else if (selected) {
        t = Math.max(spikeAmp(o.burstT, ax, 2.8), 6 + r() * 14) * jag();
        b = Math.max(spikeAmp(o.burstB, ax, 2.5), 5 + r() * 12) * jag();
        it = t * .84; ib = b * .84;
        pk = o.burstPeak; inner = o.bright;
      } else {
        t = Math.max(spikeAmp(darkT, ax, 2.8), 6 + r() * 10) * jag();
        b = Math.max(spikeAmp(darkB, ax, 2.5), 5 + r() * 8) * jag();
        it = t * .76; ib = b * .76;
        pk = o.darkPeak; inner = o.darkInner;
      }
      c.fillStyle = pk; c.fillRect(col, o.center - t, 1, t + b);
      c.fillStyle = inner; c.fillRect(col, o.center - it, 1, it + ib);
    }
    grid(c, h, o.first, o.step, .1);
    c.fillStyle = 'rgba(215,215,215,.7)';
    for (var d = 0; d < W; d += 3) c.fillRect(d, o.center, 1.500, 1);
    c.fillStyle = '#d8d8e8'; c.fillRect(SEL, 0, 1, h);
    c.fillStyle = '#b8b8c8';
    for (var ty = 2; ty < h; ty += 2.200) c.fillRect(0, Math.round(ty), 2, 1);
  }

  channel({
    id: 'chL', seed: 11, center: 111, first: 11, step: 11,
    burst: 475,
    envT: [[12, 34], [60, 28], [120, 24], [170, 18], [250, 14], [330, 11], [470, 7]],
    envB: [[12, 24], [60, 20], [120, 16], [170, 13], [250, 10], [330, 8], [470, 5]],
    quiet: '#2b8f66', bright: '#00f800', burstPeak: '#16d616', darkPeak: '#0a660a', darkInner: '#0a8a0a',
    darkT: [24, 48], darkB: [18, 40],
    burstT: [[480, 26], [488, 84], [494, 84], [492, 70], [501, 66], [507, 60], [513, 50], [517, 36], [520, 44], [524, 34], [528, 40], [533, 30], [538, 44], [542, 34], [546, 30], [551, 34], [557, 42], [561, 28], [565, 32], [572, 64], [578, 44]],
    burstB: [[484, 66], [491, 78], [497, 68], [503, 51], [511, 63], [516, 32], [520, 36], [526, 32], [533, 42], [540, 26], [547, 38], [555, 26], [563, 53], [570, 30], [577, 51]],
    extraT: [[667, 45], [757, 51], [777, 52], [797, 46], [1020, 70], [1027, 72]],
    extraB: [[658, 43], [780, 69], [1020, 83]]
  });
  channel({
    id: 'chR', seed: 29, center: 111, first: 11, step: 11.100,
    burst: 471,
    envT: [[12, 40], [60, 34], [120, 28], [170, 20], [250, 16], [330, 12], [470, 7]],
    envB: [[12, 26], [60, 24], [120, 20], [170, 14], [250, 11], [330, 10], [470, 5]],
    quiet: '#93235c', bright: '#f80000', burstPeak: '#d80808', darkPeak: '#660404', darkInner: '#8e0808',
    darkT: [30, 60], darkB: [26, 60],
    burstT: [[473, 30], [482, 38], [488, 88], [494, 96], [499, 68], [506, 60], [513, 80], [520, 50], [527, 68], [534, 36], [540, 84], [546, 40], [552, 46], [560, 40], [567, 73], [574, 34], [580, 58]],
    burstB: [[477, 46], [483, 26], [490, 110], [497, 40], [503, 100], [510, 50], [518, 70], [524, 36], [530, 81], [536, 40], [545, 88], [551, 30], [558, 56], [565, 30], [572, 40]],
    extraT: [[593, 57], [614, 56], [742, 50], [790, 58], [1000, 58]],
    extraB: [[585, 68], [598, 72], [665, 62], [760, 70], [875, 72], [960, 68], [1043, 60]]
  });

  (function () {
    var cv = document.getElementById('overview'), c = cv.getContext('2d'), h = 30, r = rng(5);
    var g = c.createLinearGradient(0, 0, 0, h);
    g.addColorStop(0, '#000'); g.addColorStop(.5, '#1e1e1e'); g.addColorStop(1, '#000');
    c.fillStyle = g; c.fillRect(0, 0, W, h);
    c.fillStyle = '#000080'; c.fillRect(319, 0, 24, h);
    for (var x = 0; x < W; x++) {
      var abs = x + 12, amp;
      if (abs < 24) amp = .6;
      else if (abs < 110) amp = .8 + (abs - 24) / 86 * 3 + r() * 1;
      else if (abs < 1031) amp = 3.6 + r() * 1.8 + 1 * Math.sin(abs / 17);
      else amp = .6;
      if (abs > 260 && abs < 290) amp *= .78;
      var sel = abs >= 331 && abs < 355;
      c.fillStyle = sel ? '#10f010' : '#058205';
      c.fillRect(x, 7.500 - amp, 1, amp * 2);
      c.fillStyle = sel ? '#f80808' : '#800000';
      c.fillRect(x, 21.500 - amp, 1, amp * 2);
    }
    c.fillStyle = '#10b8c8'; c.fillRect(318, 0, 1, h);
    c.fillStyle = '#ddd'; c.fillRect(343, 0, 1, h); c.fillRect(346, 0, 1, h);
    c.fillStyle = '#333'; c.fillRect(344, 0, 2, h);
  })();
})();
```
